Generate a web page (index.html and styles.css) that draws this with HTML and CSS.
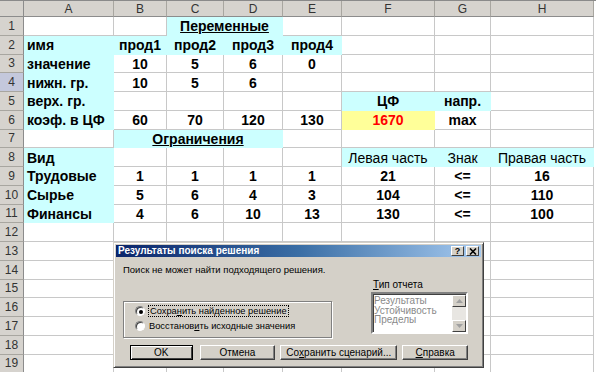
FILE: index.html
```html
<!DOCTYPE html>
<html lang="ru">
<head>
<meta charset="utf-8">
<title>Поиск решения</title>
<link rel="stylesheet" href="styles.css">
</head>
<body>
<div class="sheet">
  <div class="corner"></div>
  <div class="ch">A</div><div class="ch">B</div><div class="ch">C</div><div class="ch">D</div><div class="ch">E</div><div class="ch">F</div><div class="ch">G</div><div class="ch">H</div>

  <div class="rh">1</div>
  <div class="c"></div><div class="c"></div><div class="c f u span2">Переменные</div><div class="c"></div><div class="c"></div><div class="c"></div><div class="c"></div>

  <div class="rh">2</div>
  <div class="c f l">имя</div><div class="c f">прод1</div><div class="c f">прод2</div><div class="c f">прод3</div><div class="c f">прод4</div><div class="c"></div><div class="c"></div><div class="c"></div>

  <div class="rh">3</div>
  <div class="c f l">значение</div><div class="c">10</div><div class="c">5</div><div class="c">6</div><div class="c">0</div><div class="c"></div><div class="c"></div><div class="c"></div>

  <div class="rh sel">4</div>
  <div class="c f l">нижн. гр.</div><div class="c">10</div><div class="c">5</div><div class="c">6</div><div class="c"></div><div class="c"></div><div class="c"></div><div class="c"></div>

  <div class="rh">5</div>
  <div class="c f l">верх. гр.</div><div class="c"></div><div class="c"></div><div class="c"></div><div class="c"></div><div class="c f">ЦФ</div><div class="c f">напр.</div><div class="c"></div>

  <div class="rh">6</div>
  <div class="c f l">коэф. в ЦФ</div><div class="c">60</div><div class="c">70</div><div class="c">120</div><div class="c">130</div><div class="c y">1670</div><div class="c">max</div><div class="c"></div>

  <div class="rh">7</div>
  <div class="c"></div><div class="c f u span3">Ограничения</div><div class="c"></div><div class="c"></div><div class="c"></div><div class="c"></div>

  <div class="rh">8</div>
  <div class="c f l">Вид</div><div class="c"></div><div class="c"></div><div class="c"></div><div class="c"></div><div class="c f n">Левая часть</div><div class="c f n">Знак</div><div class="c f n">Правая часть</div>

  <div class="rh">9</div>
  <div class="c f l">Трудовые</div><div class="c">1</div><div class="c">1</div><div class="c">1</div><div class="c">1</div><div class="c">21</div><div class="c">&lt;=</div><div class="c">16</div>

  <div class="rh">10</div>
  <div class="c f l">Сырье</div><div class="c">5</div><div class="c">6</div><div class="c">4</div><div class="c">3</div><div class="c">104</div><div class="c">&lt;=</div><div class="c">110</div>

  <div class="rh">11</div>
  <div class="c f l">Финансы</div><div class="c">4</div><div class="c">6</div><div class="c">10</div><div class="c">13</div><div class="c">130</div><div class="c">&lt;=</div><div class="c">100</div>

  <div class="rh">12</div>
  <div class="c"></div><div class="c"></div><div class="c"></div><div class="c"></div><div class="c"></div><div class="c"></div><div class="c"></div><div class="c"></div>
  <div class="rh">13</div>
  <div class="c"></div><div class="c"></div><div class="c"></div><div class="c"></div><div class="c"></div><div class="c"></div><div class="c"></div><div class="c"></div>
  <div class="rh">14</div>
  <div class="c"></div><div class="c"></div><div class="c"></div><div class="c"></div><div class="c"></div><div class="c"></div><div class="c"></div><div class="c"></div>
  <div class="rh">15</div>
  <div class="c"></div><div class="c"></div><div class="c"></div><div class="c"></div><div class="c"></div><div class="c"></div><div class="c"></div><div class="c"></div>
  <div class="rh">16</div>
  <div class="c"></div><div class="c"></div><div class="c"></div><div class="c"></div><div class="c"></div><div class="c"></div><div class="c"></div><div class="c"></div>
  <div class="rh">17</div>
  <div class="c"></div><div class="c"></div><div class="c"></div><div class="c"></div><div class="c"></div><div class="c"></div><div class="c"></div><div class="c"></div>
  <div class="rh">18</div>
  <div class="c"></div><div class="c"></div><div class="c"></div><div class="c"></div><div class="c"></div><div class="c"></div><div class="c"></div><div class="c"></div>
  <div class="rh">19</div>
  <div class="c"></div><div class="c"></div><div class="c"></div><div class="c"></div><div class="c"></div><div class="c"></div><div class="c"></div><div class="c"></div>
</div>

<div class="dlg">
  <div class="titlebar">
    <span class="ttl">Результаты поиска решения</span>
    <span class="tbtns">
      <span class="tbtn q">?</span>
      <span class="tbtn"><svg width="8" height="7" viewBox="0 0 8 7"><path d="M1 0.5 L7 6.5 M7 0.5 L1 6.5" stroke="#000" stroke-width="1.6"/></svg></span>
    </span>
  </div>
  <div class="dbody">
    <div class="mid">
      <div class="leftcol">
        <div class="msg">Поиск не может найти подходящего решения.</div>
        <div class="group">
          <div class="opt"><span class="radio on"></span><span class="focus">Сохра<u>н</u>ить найденное решение</span></div>
          <div class="opt"><span class="radio"></span><span>Восстанов<u>и</u>ть исходные значения</span></div>
        </div>
      </div>
      <div class="rightcol">
        <div class="lbl"><u>Т</u>ип отчета</div>
        <div class="listbox">
          <div class="items">
            <div>Результаты</div>
            <div>Устойчивость</div>
            <div>Пределы</div>
          </div>
          <div class="vscroll">
            <span class="sbtn"><svg width="7" height="4" viewBox="0 0 7 4"><path d="M0 4 L3.5 0 L7 4 Z" fill="#a0a0a0"/></svg></span>
            <span class="track"></span>
            <span class="sbtn"><svg width="7" height="4" viewBox="0 0 7 4"><path d="M0 0 L3.5 4 L7 0 Z" fill="#a0a0a0"/></svg></span>
          </div>
        </div>
      </div>
    </div>
    <div class="btns">
      <span class="btn w-ok">OK</span>
      <span class="btn w-cancel">Отмена</span>
      <span class="btn w-save">Со<u>х</u>ранить сценарий...</span>
      <span class="btn w-help"><u>С</u>правка</span>
    </div>
  </div>
</div>
</body>
</html>
```

FILE: styles.css
```css
html, body {
  margin: 0;
  padding: 0;
  background: #ffffff;
  overflow: hidden;
}

body {
  width: 596px;
  height: 372px;
  position: relative;
  font-family: "Liberation Sans", Arial, sans-serif;
}

.sheet {
  display: grid;
  grid-template-columns: 24px 90px 53px 57px 59px 59px 93px 56px 103px;
  grid-template-rows: 16px repeat(19, 18.75px);
  width: 596px;
  border-top: 1px solid #8a8a8a;
  box-sizing: border-box;
}

.corner {
  background: #d6d3ce;
  border-right: 1px solid #8c8c8c;
  border-bottom: 1px solid #8c8c8c;
}

.ch {
  background: #d6d3ce;
  border-right: 1px solid #a8a6a0;
  border-bottom: 1px solid #8c8c8c;
  font-size: 12px;
  color: #333;
  display: flex;
  align-items: center;
  justify-content: center;
  line-height: 1;
}

.rh {
  background: #d6d3ce;
  border-right: 1px solid #8c8c8c;
  border-bottom: 1px solid #a8a6a0;
  font-size: 12px;
  color: #333;
  display: flex;
  align-items: center;
  justify-content: center;
  line-height: 1;
}

.rh.sel {
  background: #c4c8dc;
}

.c {
  border-right: 1px solid #c8c8c8;
  border-bottom: 1px solid #c8c8c8;
  font-size: 14px;
  font-weight: bold;
  color: #000;
  display: flex;
  align-items: center;
  justify-content: center;
  white-space: nowrap;
  line-height: 1;
  padding-top: 1px;
  overflow: hidden;
}

.c.l {
  justify-content: flex-start;
  padding-left: 3px;
}

.c.f {
  background: #ccffff;
  border-color: #ccffff;
}

.c.n {
  font-weight: normal;
}

.c.u {
  text-decoration: underline;
}

.c.y {
  background: #ffff99;
  border-color: #ffff99;
  color: #ff0000;
}

.span2 {
  grid-column: span 2;
}

.span3 {
  grid-column: span 3;
}

/* Dialog */
.dlg {
  position: absolute;
  left: 113px;
  top: 242px;
  width: 371px;
  height: 126px;
  box-sizing: border-box;
  background: #d4d0c8;
  border: 1px solid;
  border-color: #d4d0c8 #404040 #404040 #d4d0c8;
  box-shadow: inset 1px 1px 0 #ffffff, inset -1px -1px 0 #808080;
  padding: 2px;
  font-family: "Liberation Sans", Arial, sans-serif;
  font-size: 10px;
  color: #000;
}

.titlebar {
  height: 12px;
  background: linear-gradient(to right, #0a246a 0%, #3a6ea5 50%, #a6caf0 100%);
  display: flex;
  align-items: center;
  justify-content: space-between;
  padding: 0 2px 0 2px;
}

.ttl {
  color: #ffffff;
  font-weight: bold;
  font-size: 10px;
  line-height: 1;
  white-space: nowrap;
}

.tbtns {
  display: flex;
  gap: 2px;
}

.tbtn {
  width: 13px;
  height: 10px;
  box-sizing: border-box;
  background: #d4d0c8;
  border: 1px solid;
  border-color: #ffffff #404040 #404040 #ffffff;
  display: flex;
  align-items: center;
  justify-content: center;
  font-size: 9px;
  font-weight: bold;
  line-height: 1;
}

.dbody {
  padding: 0 13px 0 7px;
}

.mid {
  display: flex;
  justify-content: space-between;
}

.leftcol {
  width: 209px;
}

.msg {
  margin-top: 8px;
  line-height: 10px;
  font-size: 9.5px;
  white-space: nowrap;
}

.group {
  margin-top: 26px;
  height: 37px;
  box-sizing: border-box;
  border: 1px solid #808080;
  box-shadow: 1px 1px 0 #ffffff, inset 1px 1px 0 #ffffff;
  padding: 4px 0 0 11px;
  display: flex;
  flex-direction: column;
  gap: 5px;
  font-size: 9.3px;
}

.opt {
  display: flex;
  align-items: center;
  gap: 4px;
  line-height: 10px;
  white-space: nowrap;
}

.radio {
  width: 10px;
  height: 10px;
  box-sizing: border-box;
  border-radius: 50%;
  background: #ffffff;
  border: 1px solid;
  border-color: #808080 #ffffff #ffffff #808080;
  box-shadow: inset 1px 1px 0 #404040;
  position: relative;
  flex: none;
}

.radio.on::after {
  content: "";
  position: absolute;
  left: 3px;
  top: 3px;
  width: 4px;
  height: 4px;
  border-radius: 50%;
  background: #000;
}

.focus {
  outline: 1px dotted #000;
  outline-offset: 0;
  padding: 0 1px;
}

.rightcol {
  width: 97px;
  display: flex;
  flex-direction: column;
}

.lbl {
  margin-top: 23px;
  margin-left: 2px;
  line-height: 10px;
  height: 12px;
}

.listbox {
  height: 42px;
  box-sizing: border-box;
  background: #ffffff;
  border: 2px solid;
  border-color: #808080 #ffffff #ffffff #808080;
  box-shadow: inset 1px 1px 0 #404040;
  display: flex;
}

.items {
  flex: 1;
  padding: 2px 0 0 1px;
  color: #8a8a8a;
  line-height: 9.5px;
}

.vscroll {
  width: 14px;
  display: flex;
  flex-direction: column;
  background: #e8e6e2;
  margin-top: 1px;
}

.sbtn {
  height: 12px;
  box-sizing: border-box;
  background: #d4d0c8;
  border: 1px solid;
  border-color: #ffffff #404040 #404040 #ffffff;
  display: flex;
  align-items: center;
  justify-content: center;
}

.track {
  flex: 1;
}

.btns {
  display: flex;
  margin-top: 7px;
  padding-left: 7px;
}

.btn {
  height: 15px;
  box-sizing: border-box;
  border: 1px solid;
  border-color: #ffffff #404040 #404040 #ffffff;
  box-shadow: inset -1px -1px 0 #808080;
  display: flex;
  align-items: center;
  justify-content: center;
  line-height: 1;
  white-space: nowrap;
}

.w-ok { width: 63px; margin-right: 7px; border-color: #000; box-shadow: inset 1px 1px 0 #fff, inset -1px -1px 0 #404040; }
.w-cancel { width: 76px; margin-right: 5px; }
.w-save { width: 118px; margin-right: 5px; }
.w-help { width: 66px; }
```
